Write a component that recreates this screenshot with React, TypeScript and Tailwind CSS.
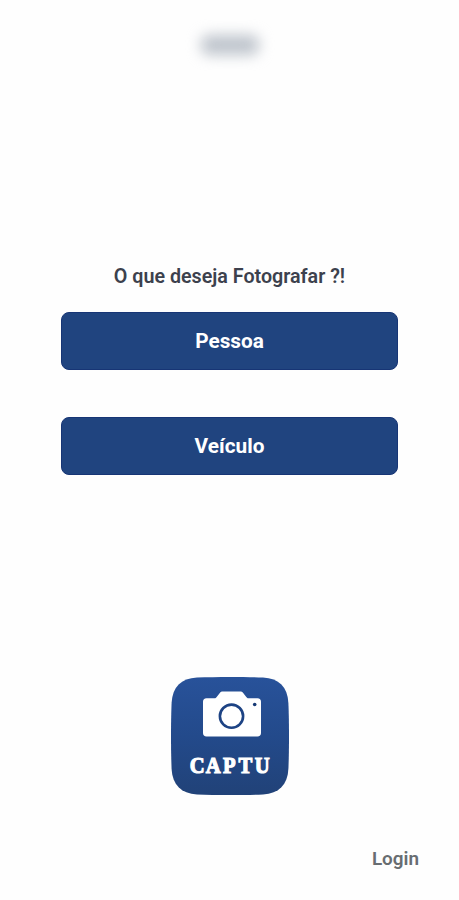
function CaptuLogo() {
  return (
    <svg width="118" height="118" viewBox="0 0 118 118" role="img" aria-label="Captu">
      <defs>
        <linearGradient id="bg" x1="0" y1="0" x2="0" y2="1">
          <stop offset="0" stopColor="#28529a" />
          <stop offset="0.5" stopColor="#234a8b" />
          <stop offset="1" stopColor="#214278" />
        </linearGradient>
      </defs>
      <path
        d="M26 .6C45 -.2 73 -.2 92 .6C108 1.500 116.500 10 117.400 26C118.200 45 118.200 73 117.400 92C116.500 108 108 116.500 92 117.400C73 118.200 45 118.200 26 117.400C10 116.500 1.500 108 .6 92C-.2 73 -.2 45 .6 26C1.500 10 10 1.500 26 .6Z"
        fill="url(#bg)"
      />
      <path
        d="M35.500 21.300H43.500C44.500 21.300 45 20.800 45.700 19.900L48.800 16C49.600 15 50.300 14.500 51.500 14.500H69.500C70.700 14.500 71.400 15 72.200 16L75.300 19.900C76 20.800 76.500 21.300 77.500 21.300H86.500C88.700 21.300 90 22.600 90 24.800V56C90 58.200 88.700 59.500 86.500 59.500H35.500C33.300 59.500 32 58.200 32 56V24.800C32 22.600 33.300 21.300 35.500 21.300Z"
        fill="#fff"
      />
      <circle cx="60.500" cy="39.200" r="11.600" fill="none" stroke="#1d4384" strokeWidth="2.600" />
      <circle cx="83.700" cy="27.500" r="1.800" fill="#173a75" />
      <text
        transform="translate(18.800 96) scale(0.86 1)"
        x="0 18.500 38.500 56.500 75.500"
        y="0"
        className="font-['Liberation_Serif',serif] text-[24px] font-bold"
        fill="#fff"
        stroke="#fff"
        strokeWidth="1.2"
      >
        CAPTU
      </text>
    </svg>
  )
}

export default function App() {
  return (
    <main className="flex h-[900px] w-[459px] flex-col items-center bg-[#fefefe] font-['Roboto',sans-serif]">
      <div className="mt-[35px] h-[20px] w-[58px] rounded-[8px] bg-[#bec4cc] blur-[7px]" />

      <h1 className="mt-[207px] text-[19.7px] leading-[30px] font-semibold whitespace-nowrap text-[#3c414d]">
        O que deseja Fotografar ?!
      </h1>

      <div className="mt-[20px] flex w-[337px] flex-col gap-[47px]">
        <button className="h-[58px] rounded-[8px] border border-[#173575] bg-[#20447f] pt-[2px] text-[20.8px] font-bold text-white">
          Pessoa
        </button>
        <button className="h-[58px] rounded-[8px] border border-[#173575] bg-[#20447f] pt-[2px] text-[20.8px] font-bold text-white">
          Veículo
        </button>
      </div>

      <div className="mt-[202px]">
        <CaptuLogo />
      </div>

      <a className="mt-[50px] mr-[40px] self-end text-[18.9px] leading-[28px] font-semibold text-[#686d71]">Login</a>
    </main>
  )
}
